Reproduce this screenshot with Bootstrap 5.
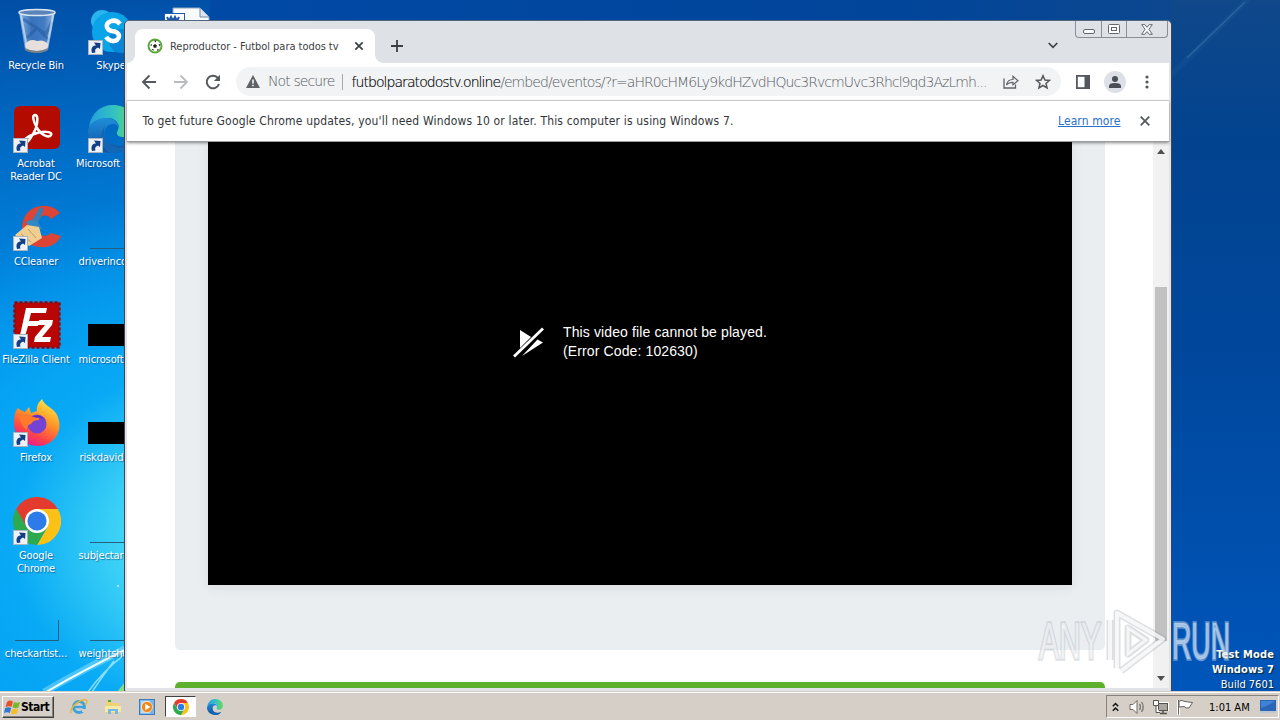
<!DOCTYPE html>
<html lang="en">
<head>
<meta charset="utf-8">
<meta name="viewport" content="width=device-width, initial-scale=1">
<title>Desktop</title>
<link href="https://cdn.jsdelivr.net/npm/bootstrap@5.3.0/dist/css/bootstrap.min.css" rel="stylesheet">
<style>
html,body{height:100%;overflow:hidden}
body{font-family:"DejaVu Sans Condensed","DejaVu Sans",sans-serif;font-stretch:condensed;font-size:11px;line-height:13px;color:#000}
svg{display:block;flex:none}
.screen{width:1280px;height:720px;background:
 radial-gradient(ellipse 440px 350px at 240px 540px,#58e4f8 0,#42d6f6 25%,rgba(10,172,246,.85) 52%,rgba(0,140,232,0) 100%),
 radial-gradient(ellipse 800px 680px at 160px 620px,#009df5 0,#0096f0 38%,rgba(0,90,190,0) 100%),
 linear-gradient(#01459c,#0055b8)}
.rightside{left:1171px;top:0;width:109px;height:692px;background:linear-gradient(#10488a 0,#02438f 20%,#00479c 50%,#0056bb 100%)}
.topside{left:210px;top:0;right:0;height:20px;background:linear-gradient(90deg,#0049a5,#01459a 65%,#11488a)}
.work{height:692px}
.icons{margin-left:-1px;padding-top:8px}
.icell{width:75px;height:98px;flex-shrink:0;color:#fff;text-shadow:1px 1px 1px rgba(0,30,80,.5);letter-spacing:-.12px}
.icell>svg{margin-left:14px;overflow:visible}
.icell .lbl{margin-top:3px;text-align:center;white-space:nowrap;position:relative;left:-.5px}
.icell .lbl.cut{text-align:left;padding-left:5px}
.win{left:124px;top:20px;width:1048px;height:672px;background:#e1e3e8;border:1px solid #3f4650;border-top-color:#51667f;border-radius:5px 5px 2px 2px;padding:1px 2px 2px 2px}
.strip{height:41px;background:#dee1e6;padding-left:8px}
.tabx{width:240px;height:34px;background:#fff;border-radius:8px 8px 0 0;color:#3c4043}
.tabx:before,.tabx:after{content:"";position:absolute;bottom:0;width:8px;height:8px}
.tabx:before{left:-8px;background:radial-gradient(circle at 0 0,transparent 7.5px,#fff 8px)}
.tabx:after{right:-8px;background:radial-gradient(circle at 100% 0,transparent 7.5px,#fff 8px)}
.caps{right:1px;top:-1px;height:17px;width:93px;border:1px solid #8b8e94;border-top:0;border-radius:0 0 4px 4px}
.caps>div+div{border-left:1px solid #8b8e94}
.bar{height:38px;border-bottom:1px solid #d6d8dc}
.omni{width:825px;height:29px;border-radius:15px;background:#f1f3f4;font-size:14px;color:#565a5f;font-family:"DejaVu Sans","DejaVu Sans Condensed",sans-serif;font-weight:200}
.host{color:#000;-webkit-text-stroke:.15px #000}
.info{height:41px;border-bottom:1px solid #9a9c9f;box-shadow:0 1px 3px rgba(0,0,0,.45);z-index:2;font-size:12px;color:#333639}
.info a{color:#2a6fc9}
.page{height:546px}
.sheet{margin-left:48px;width:930px}
.panel{height:508px;background:#ebeef1;border-radius:0 0 5px 5px;padding:0 33px}
.video{height:443px;background:#000;color:#fff;font:14px/19px "Liberation Sans",Arial,sans-serif;box-shadow:0 2px 12px rgba(0,0,0,.08)}
.green{margin-top:32px;height:6px;background:#5cb02c;border-radius:5px 5px 0 0}
.scroll{width:16px;background:#f1f1f1}
.thumb{width:12px;height:354px;background:#c1c1c1}
.taskbar{height:28px;background:#d6cfc8;border-top:1px solid #fff;box-shadow:0 -1px 0 #d6cfc8}
.start{width:52px;height:22px;border:1px solid;border-color:#fff #404040 #404040 #fff;box-shadow:inset -1px -1px 0 #87827c;font-size:12px;letter-spacing:-.5px}
.act{width:31px;height:21px;background:#fff;border:1px solid;border-color:#404040 #fff #fff #404040}
.tray{width:173px;height:23px;margin-right:1px;border:1px solid;border-color:#87827c #fff #fff #87827c}
.build{right:6px;top:648px;color:#fff;line-height:14.6px;text-shadow:1px 1px 1px #023}
.build b{letter-spacing:.15px}
.mark-logo{left:1030px;top:600px;z-index:5}
</style>
</head>
<body>
<svg width="0" height="0" class="position-absolute">
<defs>
<symbol id="cut" viewBox="0 0 15 15"><rect width="15" height="15" fill="#eef2f6"/><rect x=".5" y=".5" width="14" height="14" fill="none" stroke="#a9b4c0"/><path d="M4 13C2.500 8 4.500 5.500 8 5.500L6 2.500 12.500 3 12 9 10 7.500C8 8.500 6.500 9.500 7.500 12.500z" fill="#123f86"/></symbol>
<symbol id="chrome" viewBox="0 0 48 48"><path d="M24 12H44.800A24 24 0 0 1 24 48L34.400 30z" fill="#fbc116"/><path d="M13.600 30 3.200 12A24 24 0 0 1 44.800 12H24z" fill="#e33b2e"/><path d="M3.200 12 13.600 30 34.400 30 24 48A24 24 0 0 1 3.200 12z" fill="#2da94f"/><circle cx="24" cy="24" r="12" fill="#fff"/><circle cx="24" cy="24" r="9.600" fill="#2c7be8"/></symbol>
<linearGradient id="eg" x1="0" y1="0" x2="1" y2="0"><stop offset="0" stop-color="#239fdd"/><stop offset=".55" stop-color="#33c4c0"/><stop offset="1" stop-color="#6bd85a"/></linearGradient>
<linearGradient id="eb" x1="0" y1="0" x2="0" y2="1"><stop offset="0" stop-color="#1f8ed9"/><stop offset="1" stop-color="#0f519f"/></linearGradient>
<symbol id="edge" viewBox="0 0 48 48"><path d="M1 22C3 8 13 0 25 0 38 0 48 9 48 20c0 7-5 12-12 12-5 0-8-2-7-5 5-8-2-14-9-14C11 13 4 17 1 22z" fill="url(#eg)"/><path d="M0 25C2 17 10 13 18 13c7 0 13 4 13 10-1-2-3-4-6-4-6 0-10 6-8 13 3 8 14 12 26 6C38 45 31 48 24 48 10 48-1 37 0 25z" fill="url(#eb)"/><path d="M17 21c-3 8 0 18 10 21 6 2 12 0 16-4-5 8-13 10-20 10C14 46 10 30 17 21z" fill="#1467b5"/></symbol>
<linearGradient id="ff" x1=".8" y1="0" x2=".3" y2="1"><stop offset="0" stop-color="#fff04a"/><stop offset=".4" stop-color="#ff9a26"/><stop offset=".75" stop-color="#ff4448"/><stop offset="1" stop-color="#e3159a"/></linearGradient>
<linearGradient id="glass" x1="0" y1="0" x2="1" y2="0"><stop offset="0" stop-color="#9dbfe6"/><stop offset=".35" stop-color="#3f76bd"/><stop offset=".7" stop-color="#4a80c4"/><stop offset="1" stop-color="#a8c4e6"/></linearGradient>
</defs>
</svg>

<div class="screen position-relative overflow-hidden d-flex flex-column">
<div class="topside position-absolute"></div>
<div class="rightside position-absolute"><svg width="108" height="692"><path d="M16 58 74 2" stroke="#5a8fc0" stroke-opacity=".35" stroke-width="1.500"/><path d="M0 75 80 -4" stroke="#4d86bd" stroke-opacity=".08" stroke-width="6"/></svg></div>
<svg class="position-absolute" style="left:0;top:560px" width="125" height="132"><path d="M44 132Q86 108 125 89" stroke="#c8f6ff" stroke-opacity=".35" stroke-width="7" fill="none"/><path d="M46 132Q86 109 125 90" stroke="#f0feff" stroke-width="2" fill="none"/><path d="M88 132Q102 112 125 94M92 132Q104 114 114 101" stroke="#bdf3ff" stroke-width="1.500" fill="none" opacity=".7"/><path d="M117 132 125 122V132z" fill="#7fdd8c"/><circle cx="118" cy="26" r="1" fill="#bff4ff"/></svg>
<svg class="position-absolute" style="left:164px;top:7px" width="48" height="14"><path d="M9 1H36L45 10V14H9z" fill="#f8fafc" stroke="#90a4bc"/><path d="M36 1V10H45" fill="#dde6ef" stroke="#7089a8"/><rect x=".5" y="6.500" width="20" height="9" fill="#fff" stroke="#2459a8"/><path d="M3 10l2 4 2-4 2 4 2-4 2 4 2-4" stroke="#1d55a8" fill="none" stroke-width="2"/></svg>

<main class="work d-flex icons">
<div class="d-flex flex-column">
<div class="icell"><svg width="48" height="48"><path d="M6 4 12 42Q24 48 35 42L42 4z" fill="url(#glass)" opacity=".9"/><path d="M10 11 33 26 39 14M14 30 24 20 36 32" stroke="#1f559f" stroke-width="3" opacity=".5" fill="none"/><path d="M8 7 14 40M40 7 34 40" stroke="#cfe3f8" stroke-width="2" opacity=".7"/><ellipse cx="24" cy="4.500" rx="18" ry="3" fill="#5c84b8" stroke="#dce7f3" stroke-width="1.500"/><path d="M12 36Q17 30 24 33 31 31 35 36L34 42Q24 47 13 42z" fill="#e6dfdc"/><path d="M12 40Q24 46 35 40L34 43Q24 47 13 43z" fill="#777f88"/></svg><div class="lbl">Recycle Bin</div></div>
<div class="icell"><svg width="48" height="48"><rect x="1" y="0" width="46" height="43" rx="6" fill="#b30b00"/><path d="M22 9c-3 0-2 6 2 13 5 8 12 10 14 7 2-4-9-4-17-1-8 3-12 7-10 9 3 2 9-8 12-15C25 15 25 9 22 9z" fill="none" stroke="#fff" stroke-width="2.500"/><use href="#cut" y="32" width="15" height="15"/></svg><div class="lbl">Acrobat<br>Reader DC</div></div>
<div class="icell"><svg width="48" height="48"><path d="M47 9C38-2 19 0 12 12 4 27 13 43 27 43 38 44 45 39 48 32L38 29C31 36 22 29 24 20 26 11 34 9 38 15z" fill="#dc4435"/><path d="M26 5c2-3 5-1 4 2L24 21 18 18z" fill="#357fb5"/><path d="M13 18Q19 13 26 20L29 25 20 28z" fill="#3388c4"/><path d="M14 21 2 31 16 42 29 34 26 23z" fill="#efcf91"/><path d="M8 30 18 38M15 25 23 34" stroke="#c69c57" stroke-width="1"/><use href="#cut" y="32" width="15" height="15"/></svg><div class="lbl">CCleaner</div></div>
<div class="icell"><svg width="48" height="48"><rect x="1.500" y="0.500" width="45" height="45" fill="#b40000" stroke="#7d0f18" stroke-width="2.500" stroke-dasharray="3 2"/><rect x="2.500" y="1.500" width="43" height="43" fill="#ba0505"/><path d="M13 6H34L33 11H18L16 19H26L25 24H15L11 38H6zM26 18H40L39 23 29 35H38L37 40H21L22 35 32 23H25z" fill="#fff"/><use href="#cut" y="32" width="15" height="15"/></svg><div class="lbl">FileZilla Client</div></div>
<div class="icell"><svg width="48" height="48"><path d="M5 8C8 11 10 11 12 12L16 7 18 13C21 12 23 11 24 11 23 6 26 2 29 -1 31 5 38 7 42 12 44 14 45 17 46 21 49 35 38 46 25 46 11 46 0 35 1 22 1 17 2 11 5 8z" fill="url(#ff)"/><circle cx="24" cy="24" r="9.500" fill="#7542d6"/><path d="M7 16Q15 12 23 18 27 17 26 20 20 20 18 24 13 25 14 30C9 27 7 20 7 16z" fill="#ff7a2b"/><path d="M18 17Q29 12 34 23L32 19Q24 16 18 17z" fill="#5b2bb3"/><use href="#cut" y="32" width="15" height="15"/></svg><div class="lbl">Firefox</div></div>
<div class="icell"><svg width="48" height="48"><use href="#chrome" y="-1" width="48" height="48"/><use href="#cut" y="32" width="15" height="15"/></svg><div class="lbl">Google<br>Chrome</div></div>
<div class="icell"><svg width="48" height="48"><path d="M2 44.500H45.500V24" stroke="#23607f" fill="none"/></svg><div class="lbl">checkartist...</div></div>
</div>
<div class="d-flex flex-column">
<div class="icell"><svg width="48" height="48"><circle cx="14" cy="13" r="11" fill="#28b4ee"/><circle cx="24" cy="24" r="20" fill="#0aa4e8"/><circle cx="33" cy="33" r="12" fill="#0a86d6"/><path d="M32 16Q28 11 22 13.500C17 16 18 22 24 23 31 24 33 28 29 32 25 34.500 20 32 18 29" stroke="#fff" stroke-width="4.500" fill="none"/><use href="#cut" y="32" width="15" height="15"/></svg><div class="lbl">Skype</div></div>
<div class="icell"><svg width="48" height="48"><use href="#edge" y="-1" width="48" height="48"/><use href="#cut" y="32" width="15" height="15"/></svg><div class="lbl cut" style="padding-left:2.5px">Microsoft</div></div>
<div class="icell"><svg width="48" height="48"><path d="M2 44.500H48" stroke="#23607f"/></svg><div class="lbl cut">driverincor</div></div>
<div class="icell"><svg width="48" height="48"><rect y="22" width="48" height="22"/></svg><div class="lbl cut">microsoft</div></div>
<div class="icell"><svg width="48" height="48"><rect y="22" width="48" height="22"/></svg><div class="lbl cut" style="padding-left:6px">riskdavid</div></div>
<div class="icell"><svg width="48" height="48"><path d="M2 44.500H48" stroke="#23607f"/></svg><div class="lbl cut">subjectar</div></div>
<div class="icell"><svg width="48" height="48"><path d="M2 44.500H48" stroke="#23607f"/></svg><div class="lbl cut">weightshe</div></div>
</div>
</main>

<section class="win position-absolute d-flex flex-column">
<div class="strip position-relative d-flex align-items-end">
  <div class="tabx position-relative d-flex align-items-center">
    <svg style="margin-left:12px" width="16" height="16"><circle cx="8" cy="8" r="6.500" fill="#fff" stroke="#5aa83a" stroke-width="2"/><path d="M8 6l2 1.500-.8 2.200H6.800L6 7.500zM7 2.500h2.500L8.500 4.500zM3 7l2-1-.5 2zM11.500 6l2 .5-1 2zM4.500 11l2 0 0 2zM10 11.500l2-.5-1.500 2.200z" fill="#222"/></svg>
    <span class="text-nowrap" style="margin-left:7px;width:178px;letter-spacing:-.04px">Reproductor - Futbol para todos tv</span>
    <svg style="margin-left:6px" width="10" height="10"><path d="M1.300 1.300 8.700 8.700M8.700 1.300 1.300 8.700" stroke="#3c4043" stroke-width="1.700"/></svg>
  </div>
  <svg style="margin:0 0 11px 16px" width="12" height="12"><path d="M6 0V12M0 6H12" stroke="#3c4043" stroke-width="1.800"/></svg>
  <svg class="ms-auto" style="margin:0 111px 14px 0" width="10" height="7"><path d="M.7 1 5 5.300 9.300 1" fill="none" stroke="#3c4043" stroke-width="1.700"/></svg>
  <div class="caps position-absolute d-flex">
    <div class="d-flex align-items-center justify-content-center" style="width:25px"><svg width="12" height="5" style="margin-top:4px"><rect x=".5" y=".5" width="11" height="4" rx="1.500" fill="#fff" stroke="#62666e"/></svg></div>
    <div class="d-flex align-items-center justify-content-center" style="width:25px"><svg width="12" height="10"><rect x=".5" y=".5" width="11" height="9" rx="1" fill="#fff" stroke="#62666e"/><rect x="3.500" y="3.500" width="5" height="3" fill="#fff" stroke="#62666e"/></svg></div>
    <div class="d-flex align-items-center justify-content-center flex-grow-1"><svg width="12" height="11"><path d="M.7.7H3.800L6 3.300 8.200.7H11.300L7.900 5.300 11.300 10.300H8.200L6 7.500 3.800 10.300H.7L4.100 5.300z" fill="#fff" stroke="#62666e"/></svg></div>
  </div>
</div>
<div class="bar bg-white d-flex align-items-center">
  <svg style="margin-left:14px" width="16" height="16"><path d="M15 8H2M8.500 1.500 2 8l6.500 6.500" fill="none" stroke="#55595d" stroke-width="1.900"/></svg>
  <svg style="margin-left:16px" width="16" height="16"><path d="M1 8H14M7.500 1.500 14 8l-6.500 6.500" fill="none" stroke="#b9bbbe" stroke-width="1.800"/></svg>
  <svg style="margin-left:16px" width="16" height="16"><path d="M14 10A6.300 6.300 0 1 1 12.600 3.600L14.500 5.500" fill="none" stroke="#55595d" stroke-width="2"/><path d="M15 .8V7H8.800z" fill="#55595d"/></svg>
  <div class="omni d-flex align-items-center" style="margin-left:15px">
    <svg style="margin-left:10px" width="14" height="13"><path d="M7 0 14 13H0z" fill="#5f6368"/><path d="M7 4.500V8.500M7 9.800V11.300" stroke="#fff" stroke-width="1.500"/></svg>
    <span class="text-nowrap" style="margin-left:8px;width:74px;letter-spacing:-.9px">Not secure</span>
    <span style="width:1px;height:16px;background:#a5a8ac"></span>
    <span class="text-nowrap" style="margin-left:8.500px;width:653.500px;letter-spacing:-.935px;padding-top:1px"><span class="host">futbolparatodostv.online</span>/embed/eventos/?r=aHR0cHM6Ly9kdHZvdHQuc3RvcmUvc3Rhcl9qd3AzLmh...</span>
    <svg style="margin-left:-2px" width="16" height="14"><path d="M1 3.500V13H12.500V9.500" fill="none" stroke="#5f6368" stroke-width="1.300"/><path d="M3.500 10C4 6.500 6.500 4.500 10 4.500V1.300L15 5.700 10 9.800V7.300C7 7.300 5 8 3.500 10z" fill="none" stroke="#5f6368" stroke-width="1.200"/></svg>
    <svg style="margin-left:16px" width="16" height="16"><path d="M8 1.700 9.900 6 14.500 6.400 11 9.400 12.100 14 8 11.500 3.900 14 5 9.400 1.500 6.400 6.100 6z" fill="none" stroke="#55595d" stroke-width="1.500"/></svg>
  </div>
  <svg style="margin-left:15px" width="14" height="14"><rect x=".9" y=".9" width="12.200" height="12.200" fill="#fff" stroke="#55595d" stroke-width="1.800"/><rect x="8.500" width="5.500" height="14" fill="#55595d"/></svg>
  <svg style="margin-left:14px" width="22" height="22"><circle cx="11" cy="11" r="11" fill="#dde1e7"/><circle cx="11" cy="8" r="3" fill="#4a4e55"/><path d="M5 17V15Q5 12 11 12T17 15V17z" fill="#4a4e55"/></svg>
  <svg style="margin-left:19px" width="4" height="14"><circle cx="2" cy="2" r="1.600" fill="#55595d"/><circle cx="2" cy="7" r="1.600" fill="#55595d"/><circle cx="2" cy="12" r="1.600" fill="#55595d"/></svg>
</div>
<div class="info bg-white position-relative d-flex align-items-center">
  <span class="text-nowrap" style="margin-left:15.500px;width:915.500px;letter-spacing:.17px">To get future Google Chrome updates, you'll need Windows 10 or later. This computer is using Windows 7.</span>
  <a href="#" class="text-nowrap" style="width:66px;letter-spacing:.1px">Learn more</a>
  <svg style="margin-left:16px" width="10" height="10"><path d="M.7.7 9.300 9.300M9.300.7.7 9.300" stroke="#55595d" stroke-width="1.800"/></svg>
</div>
<div class="page bg-white d-flex">
  <div class="sheet">
    <div class="panel"><div class="video d-flex"><svg style="margin:185px 0 0 305px" width="32" height="32"><path d="M7 3 18 10 7 21z" fill="#fff"/><path d="M9 29 30 15.500 24.500 12.500z" fill="#fff"/><path d="M1 29.500 30 1.500" stroke="#fff" stroke-width="2.800"/></svg><div style="margin:181px 0 0 18px;letter-spacing:.12px">This video file cannot be played.<br>(Error Code: 102630)</div></div></div>
    <div class="green"></div>
  </div>
  <div class="scroll ms-auto d-flex flex-column align-items-center">
    <svg style="margin-top:7px" width="8" height="5"><path d="M0 5 4 0 8 5z" fill="#505050"/></svg>
    <div class="thumb" style="margin-top:133px"></div>
    <svg class="mt-auto" style="margin-bottom:7px" width="8" height="5"><path d="M0 0 4 5 8 0z" fill="#505050"/></svg>
  </div>
</div>
</section>

<div class="build position-absolute text-end"><b>Test Mode<br>Windows 7</b><div style="padding-top:1px">Build 7601</div></div>
<svg class="mark-logo position-absolute" width="210" height="80"><g font-family="Liberation Sans Narrow,Liberation Sans" font-size="51" fill="#fff" fill-opacity=".5" stroke-width="3.500" paint-order="stroke"><text x="9" y="59" textLength="62" lengthAdjust="spacingAndGlyphs" stroke="#a0a9b2" stroke-opacity=".35">ANY</text><text x="142" y="59" textLength="58" lengthAdjust="spacingAndGlyphs" stroke="#c5d4e6" stroke-opacity=".5">RUN</text></g><path d="M80 60V20M87 68V13L133 39 91 71M98 54V28L116 40z" fill="none" stroke="#8e969e" stroke-opacity=".3" stroke-width="7" stroke-linejoin="round"/><path d="M80 60V20M87 68V13L133 39 91 71" fill="none" stroke="#fff" stroke-opacity=".75" stroke-width="4" stroke-linejoin="round"/><path d="M98 54V28L116 40z" fill="none" stroke="#fff" stroke-opacity=".7" stroke-width="3"/></svg>

<footer class="taskbar d-flex align-items-center position-relative">
  <div class="start d-flex align-items-center fw-bold" style="margin-left:2px"><svg style="margin-left:1px" width="17" height="16"><path d="M3 3Q6 .5 9 2.500L7.500 8Q5 6.500 1.500 8z" fill="#e8512a"/><path d="M10 3Q13 4.500 16 3L14.500 8.500Q11.500 10 8.500 8.300z" fill="#7ab52e"/><path d="M1.200 9Q4.500 7.500 7.200 9L5.800 14Q3 12.500 0 14z" fill="#3478d0"/><path d="M8.300 9.500Q11 11 14.200 9.700L12.800 14.500Q10 16 7 14.500z" fill="#f7bd22"/></svg><span style="padding-top:1px">Start</span></div>
  <svg style="margin-left:16px" width="18" height="18"><circle cx="9" cy="9" r="5.500" fill="none" stroke="#3ba4dd" stroke-width="3"/><path d="M4 9H15" stroke="#3ba4dd" stroke-width="2.400"/><path d="M12 11H18V14H12z" fill="#d6cfc8"/><path d="M1 15C-1 10 11 0 16 2 18 3 16 6 15 7" fill="none" stroke="#e9b632" stroke-width="1.500"/></svg>
  <svg style="margin-left:17px" width="16" height="16"><path d="M1 2H6L7 4H14V14H1z" fill="#f0d273"/><rect x="3" y="1" width="3" height="2" fill="#54a83d"/><path d="M0 7H16V13H0z" fill="#f9e9a6"/><path d="M3 15V10H13V15H10V12H6V15z" fill="#78b8e2"/></svg>
  <svg style="margin-left:18px" width="16" height="16"><rect x=".5" y=".5" width="15" height="15" fill="#78b5e5" stroke="#397bbb"/><rect x="1.800" y="1.800" width="9" height="12.500" fill="#b7dbf2"/><circle cx="8" cy="8" r="5.500" fill="#f18516" stroke="#fff" stroke-opacity=".6"/><path d="M6.200 4.700 11.500 8 6.200 11.300z" fill="#fff"/></svg>
  <div class="act d-flex align-items-center justify-content-center" style="margin-left:10px"><svg width="16" height="16"><use href="#chrome" width="16" height="16"/></svg></div>
  <svg style="margin-left:11px" width="16" height="16"><use href="#edge" width="16" height="16"/></svg>
  <div class="tray d-flex align-items-center ms-auto">
    <svg style="margin-left:5px" width="7" height="10"><path d="M.8 4.300 3.500 1.500 6.200 4.300M.8 8.800 3.500 6 6.200 8.800" fill="none" stroke="#111" stroke-width="1.500"/></svg>
    <svg style="margin-left:10px" width="17" height="16"><path d="M1 5.500H4L8 1.500V14.500L4 10.500H1z" fill="#fff" stroke="#6c6863"/><path d="M10.500 5Q12.500 8 10.500 11M12.500 3Q16 8 12.500 13" fill="none" stroke="#77736e" stroke-width="1.300"/></svg>
    <svg style="margin-left:7px" width="16" height="16"><rect x="4.500" y="3.500" width="11" height="8" fill="#aaa" stroke="#fff"/><rect x="5.500" y="4.500" width="9" height="7" fill="#aaa6a2" stroke="#55524e"/><path d="M7 14.500H14M10 11V14" stroke="#55524e" stroke-width="1.500"/><path d="M.5 1.500H5.500V6.500H.5zM3 7V13.500H7" fill="#fff" stroke="#55524e"/></svg>
    <svg style="margin-left:8px" width="17" height="16"><path d="M1.500 1V16" stroke="#fff" stroke-width="3"/><path d="M2 2Q5 .8 8 2.500L15.500 3.500 12 9Q9 9.500 7 7.500L2 8z" fill="#fff" stroke="#66625e"/><path d="M1.500 1V15.500" stroke="#66625e"/></svg>
    <span class="text-nowrap" style="margin-left:15px;width:51px;padding-top:1px">1:01 AM</span>
    <svg width="16" height="14"><rect width="16" height="11" fill="#2a66b5"/><path d="M1 8Q8 6 15 1H1z" fill="#3f83d6"/><path d="M0 11H16V13H0z" fill="#bcc7d4"/></svg>
  </div>
</footer>
</div>
<script src="https://cdn.jsdelivr.net/npm/bootstrap@5.3.0/dist/js/bootstrap.bundle.min.js"></script>
</body>
</html>
